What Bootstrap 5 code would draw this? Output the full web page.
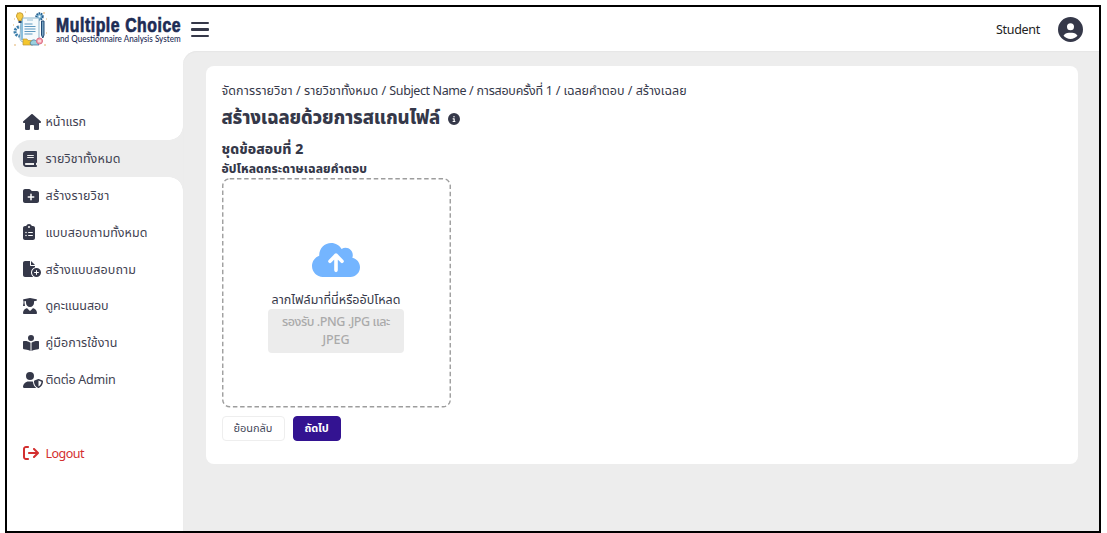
<!DOCTYPE html>
<html lang="th">
<head>
<meta charset="utf-8">
<meta name="viewport" content="width=device-width, initial-scale=1">
<title>Multiple Choice and Questionnaire Analysis System</title>
<link rel="stylesheet" href="https://cdn.jsdelivr.net/npm/bootstrap@5.3.0/dist/css/bootstrap.min.css">
<style>
:root{--ink:#353849;--canvas:#ededed}
body{font-family:"Noto Sans Thai","Noto Sans",sans-serif;font-size:12.5px;color:var(--ink);line-height:18px;height:533px;overflow:hidden;padding:5px 6px 0 5px;background:#fff}
.frame{border:2px solid #000;height:528px}
.topbar{height:44px;padding:0 16px 0 5px;background:#fff}
.brand{width:125px;margin-left:8px}
.brand-title{font-family:"Liberation Sans",sans-serif;font-weight:700;font-size:19.5px;letter-spacing:.7px;line-height:20px;color:#1d2c55;-webkit-text-stroke:.7px #1d2c55}
.brand-sub{font-family:Lato,sans-serif;font-weight:500;font-size:8.5px;line-height:8px;color:#1d2c55}
.squeeze{display:block;transform-origin:0 50%;white-space:nowrap}
.menu-btn{width:18px;height:16px;margin-left:10px;margin-top:1px}
.menu-btn i{display:block;height:2.4px;border-radius:1px;background:var(--ink)}
.user-name{color:#222;margin:3px 18px 0 0}
.body-row{background:#fff;height:480px}
.sidebar{width:176px;padding:52.6px 0 0 5px}
.side-item{height:36.8px;padding-left:10.5px;color:#3f4252;text-decoration:none;border-radius:18.4px 0 0 18.4px;position:relative}
.side-item svg{height:16px;display:block}
.side-item .fit{padding-top:3px}
.ico{width:23px;flex:none}
.side-item.current{background:var(--canvas)}
.side-item.current::before,.side-item.current::after{content:"";position:absolute;right:0;width:14px;height:14px}
.side-item.current::before{top:-14px;background:radial-gradient(circle at 0 0,#fff 13.5px,var(--canvas) 14px)}
.side-item.current::after{bottom:-14px;background:radial-gradient(circle at 0 100%,#fff 13.5px,var(--canvas) 14px)}
.side-item.logout{margin-top:36.8px;color:#d32f2f}
.workspace{background:var(--canvas);border-radius:14px 0 0 0;padding:15px 21px 0 23px;box-shadow:inset 0 1px 1px #e6e6e6}
.panel{background:#fff;border-radius:8px;height:398px;padding:17px 15.5px}
.panel h1{font-size:18.5px;font-weight:800;line-height:24px}
.panel h2{font-size:14px;font-weight:800;line-height:20px;margin-top:10px}
.panel h3{font-size:12px;font-weight:800;line-height:14px;margin-top:2px}
.title-row{margin-top:5px}
.drop{width:229px;height:229.5px;padding-top:65px;margin-top:2px}
.drop-edge{position:absolute;inset:0;width:229px;height:230px}
.drop-label{margin-top:14.5px}
.hint{width:136px;height:44.5px;border-radius:4px;background:#ececec;color:#aaa;padding-top:5px;font-weight:500;margin-top:-1px}
.act{height:25px;border-radius:4px;font-size:11px;line-height:23px;padding:0;border:1px solid #eee;color:#45485a;background:#fff}
.act.back{width:63px}
.act.next{width:48px;background:#331391;border-color:#331391;color:#fff;font-weight:700}
.fit{white-space:nowrap;display:inline-block}
</style>
<script src="https://cdn.jsdelivr.net/npm/bootstrap@5.3.0/dist/js/bootstrap.bundle.min.js"></script>
</head>
<body>
<div class="frame">
<header class="topbar d-flex align-items-center">
<svg width="36" height="36" viewBox="0 0 36 36" fill="none" stroke-width="1">
<path d="M2 8h1M5 2h1M13 1h1M31 2h2M34 8h1M2 34h2M34 22h1M32 34h2M1 14h1" stroke="#e3b26c"/>
<circle cx="7.500" cy="20.500" r="4.500" stroke="#397ca9" stroke-width="3" stroke-dasharray="2 1"/>
<circle cx="27.500" cy="5.500" r="3.200" fill="#82b9d8" stroke="#28608f" stroke-width="2" stroke-dasharray="1.500 .8"/><circle cx="27.500" cy="5.500" r="1" fill="#fff"/>
<path d="M9 7h18v24H12c-3 0-4-2-4-4z" fill="#f5fafc" stroke="#8bb3ca"/>
<path d="M9 7h2v22H9z" fill="#8bbfdc"/>
<path d="M12.500 13h8M12.500 15.500h11M12.500 18h11M12.500 20.500h11M12.500 23h8" stroke="#5e99c0"/>
<path d="M15 9h6" stroke="#c5dce8" stroke-width="2"/>
<path d="M29.500 10h2.500v14l-1.200 3-1.300-3z" fill="#79a5c3" stroke="#234b76"/>
<path d="M4.500 5a3.300 3.300 0 1 1 6.600 0c0 2-1.700 2-1.700 4.500H6.200C6.200 7 4.500 7 4.500 5z" fill="#f7ce48" stroke="#c79d35"/>
<path d="M6.500 10h3v2h-3z" fill="#28486c"/>
<path d="M11 28h4l1 1.500h5V34H11z" fill="#f4c62d" stroke="#b9953b" stroke-width=".7"/>
<path d="M18 32c2-4 5-4 7-1l2 3h-8z" fill="#9bd0de" stroke="#366b98" stroke-width=".7"/>
<circle cx="27.500" cy="30" r="3" fill="#f7a9b5" stroke="#d96b82"/><path d="M26 30h3" stroke="#fff"/>
</svg>
<div class="brand">
<span class="squeeze brand-title" data-scale="125.5">Multiple Choice</span>
<span class="squeeze brand-sub" data-scale="125">and Questionnaire Analysis System</span>
</div>
<div class="menu-btn d-flex flex-column justify-content-between"><i></i><i></i><i></i></div>
<span class="ms-auto"></span><span class="fit user-name" data-w="44">Student</span>
<svg width="25" height="25" viewBox="0 0 512 512" fill="#353849"><path d="M399 384.200C376.900 345.800 335.400 320 288 320H224c-47.400 0-88.900 25.800-111 64.200c35.200 39.200 86.200 63.800 143 63.800s107.800-24.700 143-63.800zM0 256a256 256 0 1 1 512 0A256 256 0 1 1 0 256zm256 16a72 72 0 1 0 0-144 72 72 0 1 0 0 144z"/></svg>
</header>
<div class="body-row d-flex">
<nav class="sidebar flex-shrink-0">
<a class="side-item d-flex align-items-center"><span class="ico"><svg viewBox="0 0 576 512" fill="#353849"><path d="M575.800 255.500c0 18-15 32.100-32 32.100h-32l.7 160.200V472c0 22.100-17.900 40-40 40H392c-22.100 0-40-17.900-40-40V384c0-17.700-14.300-32-32-32H256c-17.700 0-32 14.300-32 32v88c0 22.100-17.900 40-40 40H104c-22.100 0-40-17.900-40-40V287.600H32c-18 0-32-14-32-32.100c0-9 3-17 10-24L266.400 8c7-7 15-8 22-8s15 2 21 7L564.800 231.500c8 7 12 15 11 24z"/></svg></span><span class="fit" data-w="40.5">หน้าแรก</span></a>
<a class="side-item current d-flex align-items-center"><span class="ico"><svg viewBox="0 0 448 512" fill="#353849"><path d="M96 0C43 0 0 43 0 96V416c0 53 43 96 96 96H384h32c17.700 0 32-14.300 32-32s-14.300-32-32-32V384c17.700 0 32-14.300 32-32V32c0-17.700-14.300-32-32-32H384 96zm0 384H352v64H96c-17.700 0-32-14.300-32-32s14.300-32 32-32zm32-240c0-8.800 7.200-16 16-16H336c8.800 0 16 7.200 16 16s-7.200 16-16 16H144c-8.800 0-16-7.200-16-16zm16 48H336c8.800 0 16 7.200 16 16s-7.200 16-16 16H144c-8.800 0-16-7.200-16-16s7.200-16 16-16z"/></svg></span><span class="fit" data-w="75">รายวิชาทั้งหมด</span></a>
<a class="side-item d-flex align-items-center"><span class="ico"><svg viewBox="0 0 512 512" fill="#353849"><path d="M512 416c0 35.300-28.700 64-64 64H64c-35.300 0-64-28.700-64-64V96C0 60.700 28.700 32 64 32H192c20.100 0 39.100 9.500 51.200 25.600l19.200 25.600c6 8.100 15.500 12.800 25.600 12.800H448c35.300 0 64 28.700 64 64V416zM232 376c0 13.300 10.700 24 24 24s24-10.700 24-24V312h64c13.300 0 24-10.700 24-24s-10.700-24-24-24H280V200c0-13.300-10.700-24-24-24s-24 10.700-24 24v64H168c-13.300 0-24 10.700-24 24s10.700 24 24 24h64v64z"/></svg></span><span class="fit" data-w="64">สร้างรายวิชา</span></a>
<a class="side-item d-flex align-items-center"><span class="ico"><svg viewBox="0 0 384 512" fill="#353849"><path d="M192 0c-41.800 0-77.400 26.700-90.500 64H64C28.700 64 0 92.700 0 128V448c0 35.300 28.700 64 64 64H320c35.300 0 64-28.700 64-64V128c0-35.300-28.700-64-64-64H282.500C269.400 26.700 233.800 0 192 0zm0 64a32 32 0 1 1 0 64 32 32 0 1 1 0-64zM72 272a24 24 0 1 1 48 0 24 24 0 1 1 -48 0zm104-16H304c8.800 0 16 7.200 16 16s-7.200 16-16 16H176c-8.800 0-16-7.200-16-16s7.200-16 16-16zM72 368a24 24 0 1 1 48 0 24 24 0 1 1 -48 0zm88 0c0-8.800 7.200-16 16-16H304c8.800 0 16 7.200 16 16s-7.200 16-16 16H176c-8.800 0-16-7.200-16-16z"/></svg></span><span class="fit" data-w="102">แบบสอบถามทั้งหมด</span></a>
<a class="side-item d-flex align-items-center"><span class="ico"><svg viewBox="0 0 576 512" fill="#353849"><path d="M0 64C0 28.700 28.700 0 64 0H224V128c0 17.700 14.300 32 32 32H384v38.600C310.100 219.500 256 287.400 256 368c0 59.100 29.100 111.300 73.700 143.300c-3.200 .5-6.400 .7-9.700 .7H64c-35.300 0-64-28.700-64-64V64zm384 64H256V0L384 128zm48 96a144 144 0 1 1 0 288 144 144 0 1 1 0-288zm16 80c0-8.800-7.200-16-16-16s-16 7.200-16 16v48H368c-8.800 0-16 7.200-16 16s7.200 16 16 16h48v48c0 8.800 7.200 16 16 16s16-7.200 16-16V384h48c8.800 0 16-7.200 16-16s-7.200-16-16-16H448V304z"/></svg></span><span class="fit" data-w="90.5">สร้างแบบสอบถาม</span></a>
<a class="side-item d-flex align-items-center"><span class="ico"><svg viewBox="0 0 448 512" fill="#353849"><path d="M219.300 .5c3.100-.6 6.300-.6 9.400 0l200 40C439.900 42.700 448 52.600 448 64s-8.100 21.300-19.300 23.500L352 102.900V160c0 70.700-57.300 128-128 128s-128-57.300-128-128V102.900L48 93.300v65.100l15.700 78.400c.9 4.700-.3 9.600-3.300 13.300s-7.600 5.900-12.400 5.900H16c-4.800 0-9.300-2.100-12.400-5.900s-4.300-8.600-3.300-13.300L16 158.400V86.600C6.500 83.300 0 74.300 0 64C0 52.600 8.100 42.700 19.300 40.500l200-40zM111.900 327.700c10.500-3.400 21.800 .4 29.400 8.500l71 75.500c6.300 6.700 17 6.700 23.300 0l71-75.500c7.600-8.100 18.900-11.900 29.400-8.500C401 348.600 448 409.400 448 481.300c0 17-13.800 30.700-30.700 30.700H30.700C13.800 512 0 498.200 0 481.300c0-71.900 47-132.700 111.900-153.600z"/></svg></span><span class="fit" data-w="63">ดูคะแนนสอบ</span></a>
<a class="side-item d-flex align-items-center"><span class="ico"><svg viewBox="0 0 512 512" fill="#353849"><path d="M160 96a96 96 0 1 1 192 0A96 96 0 1 1 160 96zm80 152V512l-48.400-24.200c-20.900-10.400-43.500-17-66.800-19.300l-96-9.600C12.500 457.200 0 443.500 0 427V224c0-17.700 14.300-32 32-32H62.300c63.600 0 125.600 19.600 177.700 56zm32 264V248c52.100-36.400 114.100-56 177.700-56H480c17.700 0 32 14.300 32 32V427c0 16.400-12.500 30.200-28.800 31.800l-96 9.600c-23.200 2.300-45.900 8.900-66.800 19.300L272 512z"/></svg></span><span class="fit" data-w="72">คู่มือการใช้งาน</span></a>
<a class="side-item d-flex align-items-center"><span class="ico"><svg viewBox="0 0 640 512" fill="#353849"><path d="M224 256A128 128 0 1 0 224 0a128 128 0 1 0 0 256zm-45.700 48C79.800 304 0 383.800 0 482.300C0 498.700 13.300 512 29.700 512H418.300c1.800 0 3.500-.2 5.300-.5c-76.300-55.100-99.800-141-103.100-200.200c-16.100-4.800-33.100-7.300-50.700-7.300H178.300zm308.800-78.300l-120 48C358 277.400 352 286.200 352 296c0 63.300 25.900 168.800 134.800 214.200c5.900 2.500 12.600 2.500 18.500 0C614.100 464.800 640 359.300 640 296c0-9.800-6-18.600-15.100-22.300l-120-48c-5.700-2.300-12.100-2.300-17.800 0zM591.400 312c-3.900 50.700-27.200 116.700-95.400 149.700V273.800L591.400 312z"/></svg></span><span class="fit" data-w="70">ติดต่อ Admin</span></a>
<a class="side-item logout d-flex align-items-center"><span class="ico"><svg viewBox="0 0 512 512" fill="#d32f2f"><path d="M502.600 278.600c12.500-12.500 12.500-32.800 0-45.300l-128-128c-12.500-12.500-32.800-12.500-45.300 0s-12.500 32.800 0 45.300L402.700 224 192 224c-17.700 0-32 14.300-32 32s14.300 32 32 32l210.700 0-73.400 73.400c-12.500 12.500-12.500 32.800 0 45.300s32.800 12.500 45.300 0l128-128zM160 96c17.700 0 32-14.300 32-32s-14.300-32-32-32L96 32C43 32 0 75 0 128L0 384c0 53 43 96 96 96l64 0c17.700 0 32-14.300 32-32s-14.300-32-32-32l-64 0c-17.700 0-32-14.300-32-32l0-256c0-17.700 14.300-32 32-32l64 0z"/></svg></span><span class="fit" data-w="38.5">Logout</span></a>
</nav>
<main class="workspace flex-grow-1">
<section class="panel">
<div class="crumbs"><span class="fit" data-w="79.300">จัดการรายวิชา /</span> <span class="fit" data-w="82">รายวิชาทั้งหมด /</span> <span class="fit" data-w="84">Subject Name /</span> <span class="fit" data-w="83.500">การสอบครั้งที่ 1 /</span> <span class="fit" data-w="69">เฉลยคำตอบ /</span> <span class="fit" data-w="51">สร้างเฉลย</span></div>
<div class="title-row d-flex align-items-center"><h1 class="mb-0"><span class="fit" data-w="218.5">สร้างเฉลยด้วยการสแกนไฟล์</span></h1>
<svg class="ms-2" style="margin-top:2px" width="12" height="12" viewBox="0 0 512 512" fill="#353849"><path d="M256 512A256 256 0 1 0 256 0a256 256 0 1 0 0 512zM216 336h24V272H216c-13.300 0-24-10.700-24-24s10.700-24 24-24h48c13.300 0 24 10.700 24 24v88h8c13.300 0 24 10.700 24 24s-10.700 24-24 24H216c-13.300 0-24-10.700-24-24s10.700-24 24-24zm40-208a32 32 0 1 1 0 64 32 32 0 1 1 0-64z"/></svg></div>
<h2 class="mb-0"><span class="fit" data-w="82">ชุดข้อสอบที่ 2</span></h2>
<h3 class="mb-0"><span class="fit" data-w="145.5">อัปโหลดกระดาษเฉลยคำตอบ</span></h3>
<div class="drop position-relative d-flex flex-column align-items-center">
<svg class="drop-edge" fill="none"><rect x=".75" y=".75" width="227.500" height="228" rx="7" stroke="#9d9d9d" stroke-width="1.400" stroke-dasharray="4.500 2.700"/></svg>
<svg width="48" height="34" viewBox="0 32 640 448" preserveAspectRatio="none"><path fill="#74b5ff" d="M144 480C64.500 480 0 415.500 0 336c0-62.800 40.200-116.200 96.200-135.900c-.1-2.700-.2-5.400-.2-8.100c0-88.400 71.600-160 160-160c59.300 0 111 32.200 138.700 80.200C409.900 102 428.300 96 448 96c53 0 96 43 96 96c0 12.200-2.300 23.800-6.400 34.600C596 238.400 640 290.100 640 352c0 70.700-57.300 128-128 128H144z"/><path d="M240 272l80-80 80 80M320 200V392" fill="none" stroke="#fff" stroke-width="48" stroke-linecap="round" stroke-linejoin="round"/></svg>
<div class="drop-label"><span class="fit" data-w="129">ลากไฟล์มาที่นี่หรืออัปโหลด</span></div>
<div class="hint text-center"><span class="fit" data-w="108">รองรับ .PNG .JPG และ</span><br><span class="fit" data-w="27">JPEG</span></div>
</div>
<div class="d-flex gap-2 mt-2"><button class="btn act back"><span class="fit" data-w="39">ย้อนกลับ</span></button><button class="btn act next"><span class="fit" data-w="24">ถัดไป</span></button></div>
</section>
</main>
</div>
</div>
<script>
document.querySelectorAll('.fit').forEach(el => {
  const target = +el.dataset.w, base = el.getBoundingClientRect().width;
  el.style.letterSpacing = '1px';
  const per = el.getBoundingClientRect().width - base;
  el.style.letterSpacing = ((target - base) / per).toFixed(3) + 'px';
});
// Condense the wordmark lines to the logo width.
document.querySelectorAll('[data-scale]').forEach(el => {
  el.style.width = 'max-content';
  el.style.transform = 'scaleX(' + (+el.dataset.scale / el.offsetWidth) + ')';
});
</script>
</body>
</html>
